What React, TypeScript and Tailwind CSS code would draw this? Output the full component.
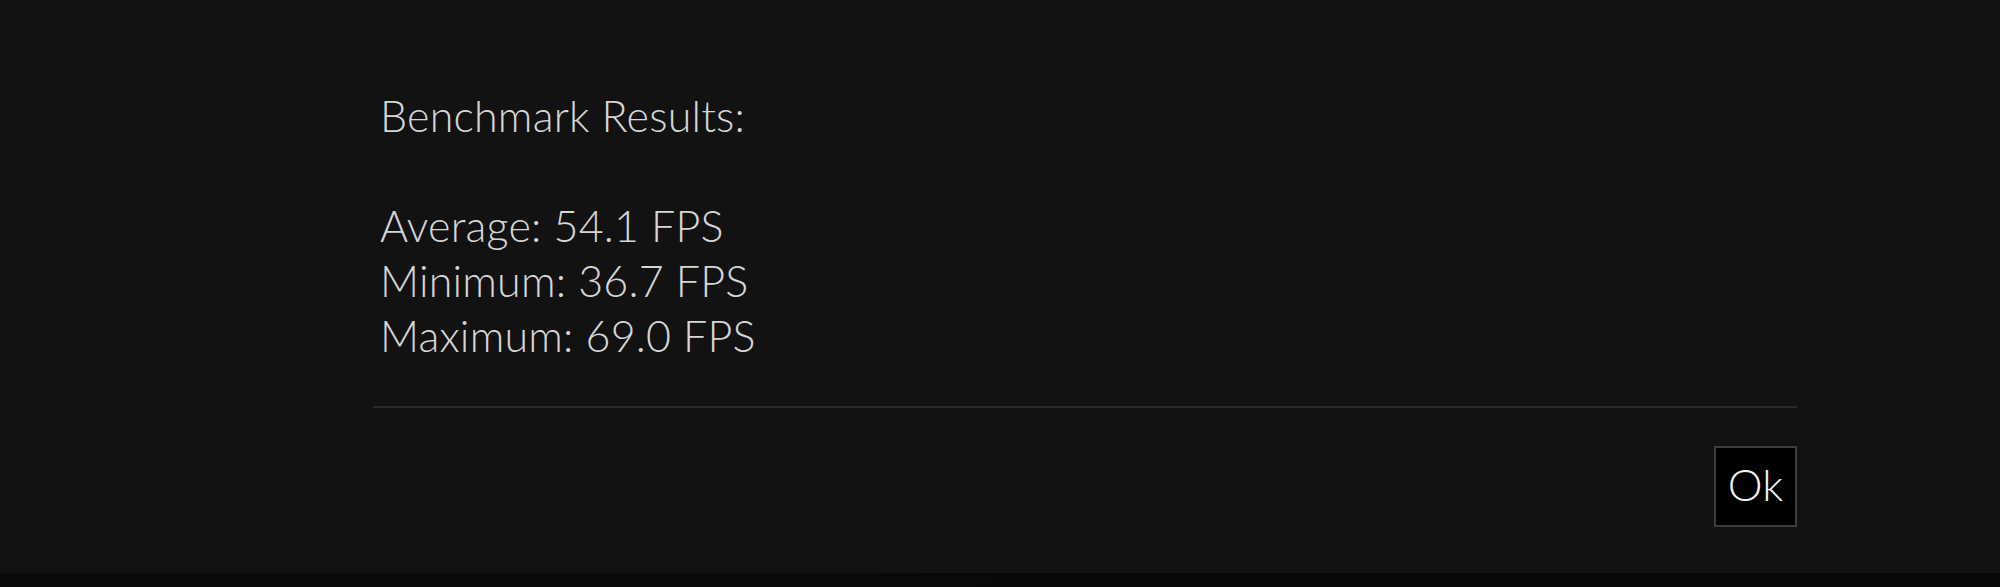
const rows = [
  { label: "Average", value: "54.1" },
  { label: "Minimum", value: "36.7" },
  { label: "Maximum", value: "69.0" },
];

export default function App() {
  return (
    <div className="w-[2000px] h-[587px] flex flex-col bg-[#121212] overflow-hidden">
      {/* Results dialog */}
      <div className="h-[573px] flex flex-col pl-[373px] pr-[203px] pt-[88px]">
        <div
          className="pl-[7px] text-[43px] leading-[55px] font-light text-[#d6d6d6] tracking-[0.2px]"
          style={{ fontFamily: "Lato, 'Open Sans', sans-serif" }}
        >
          <p>Benchmark Results:</p>
          <p>&nbsp;</p>
          {rows.map((r) => (
            <p key={r.label}>
              {r.label}: {r.value} FPS
            </p>
          ))}
        </div>
        <div className="mt-[43px] h-[2px] bg-[#2a2a2a]" />
        <div className="flex justify-end pt-[38px]">
          <button
            className="w-[83px] h-[81px] pb-[6px] bg-black border-2 border-[#3d3d3d] text-[44px] font-light text-[#f2f2f2] flex items-center justify-center"
            style={{ fontFamily: "Lato, 'Open Sans', sans-serif" }}
          >
            Ok
          </button>
        </div>
      </div>
      {/* backdrop strip showing scene behind */}
      <div className="flex-1 bg-gradient-to-r from-[#0b0a08] via-[#0a0907] to-[#080807]" />
    </div>
  );
}
